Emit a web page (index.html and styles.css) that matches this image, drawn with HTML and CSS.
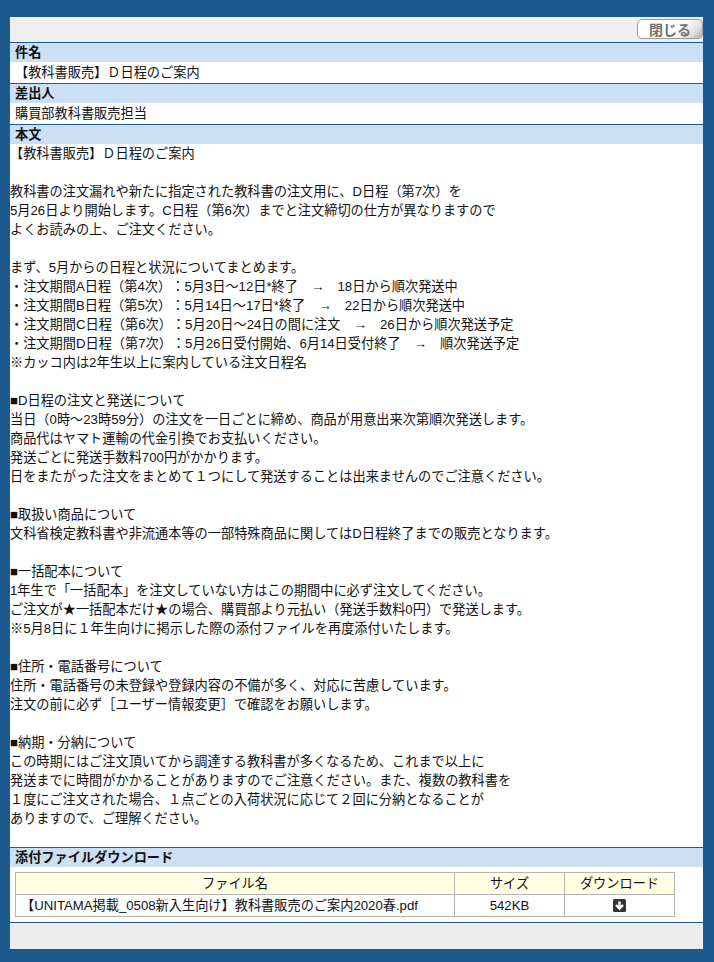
FILE: index.html
```html
<!DOCTYPE html>
<html lang="ja">
<head>
<meta charset="utf-8">
<title>本文</title>
<link rel="stylesheet" href="styles.css">
</head>
<body>
<main class="panel">
  <div class="toolbar">
    <button class="close" type="button">閉じる</button>
  </div>
  <section class="block">
    <h2 class="head">件名</h2>
    <div class="value subject">【教科書販売】Ｄ日程のご案内</div>
  </section>
  <section class="block">
    <h2 class="head">差出人</h2>
    <div class="value">購買部教科書販売担当</div>
  </section>
  <section class="block">
    <h2 class="head">本文</h2>
    <div class="message">【教科書販売】Ｄ日程のご案内

教科書の注文漏れや新たに指定された教科書の注文用に、D日程（第7次）を
5月26日より開始します。C日程（第6次）までと注文締切の仕方が異なりますので
よくお読みの上、ご注文ください。

まず、5月からの日程と状況についてまとめます。
・注文期間A日程（第4次）：5月3日～12日*終了　→　18日から順次発送中
・注文期間B日程（第5次）：5月14日～17日*終了　→　22日から順次発送中
・注文期間C日程（第6次）：5月20日～24日の間に注文　→　26日から順次発送予定
・注文期間D日程（第7次）：5月26日受付開始、6月14日受付終了　→　順次発送予定
※カッコ内は2年生以上に案内している注文日程名

■D日程の注文と発送について
当日（0時～23時59分）の注文を一日ごとに締め、商品が用意出来次第順次発送します。
商品代はヤマト運輸の代金引換でお支払いください。
発送ごとに発送手数料700円がかかります。
日をまたがった注文をまとめて１つにして発送することは出来ませんのでご注意ください。

■取扱い商品について
文科省検定教科書や非流通本等の一部特殊商品に関してはD日程終了までの販売となります。

■一括配本について
1年生で「一括配本」を注文していない方はこの期間中に必ず注文してください。
ご注文が★一括配本だけ★の場合、購買部より元払い（発送手数料0円）で発送します。
※5月8日に１年生向けに掲示した際の添付ファイルを再度添付いたします。

■住所・電話番号について
住所・電話番号の未登録や登録内容の不備が多く、対応に苦慮しています。
注文の前に必ず［ユーザー情報変更］で確認をお願いします。

■納期・分納について
この時期にはご注文頂いてから調達する教科書が多くなるため、これまで以上に
発送までに時間がかかることがありますのでご注意ください。また、複数の教科書を
１度にご注文された場合、１点ごとの入荷状況に応じて２回に分納となることが
ありますので、ご理解ください。</div>
  </section>
  <section class="block attach">
    <h2 class="head">添付ファイルダウンロード</h2>
    <div class="table-wrap">
      <table class="files">
        <thead>
          <tr><th class="c-name">ファイル名</th><th class="c-size">サイズ</th><th class="c-dl">ダウンロード</th></tr>
        </thead>
        <tbody>
          <tr>
            <td class="c-name file">【UNITAMA掲載_0508新入生向け】教科書販売のご案内2020春.pdf</td>
            <td class="c-size">542KB</td>
            <td class="c-dl">
              <svg class="dl-icon" viewBox="0 0 13 13" width="13" height="13" aria-label="ダウンロード">
                <rect width="13" height="13" rx="1.5" fill="#333"/>
                <path d="M6.5 2.5v7M3 6l3.5 3.6L10 6" fill="none" stroke="#fff" stroke-width="2.4"/>
              </svg>
            </td>
          </tr>
        </tbody>
      </table>
    </div>
  </section>
  <div class="footer"></div>
</main>
</body>
</html>
```
FILE: styles.css
```css
html, body { margin: 0; padding: 0; }
body {
  background: #1c5a90;
  padding: 17px 11px 13px 10px;
  font-family: "Liberation Sans", "Noto Sans CJK JP", sans-serif;
  font-size: 13.2px;
  color: #111;
  text-spacing-trim: space-all;
}
.panel { background: #fff; display: flex; flex-direction: column; height: 932px; }
.toolbar {
  height: 25px;
  background: #efefef;
  display: flex;
  justify-content: flex-end;
  align-items: flex-start;
  padding-top: 2px;
  box-sizing: border-box;
}
.close {
  width: 66px;
  height: 20px;
  padding: 0;
  margin-right: 0;
  border: 1px solid #999;
  border-radius: 5px;
  background: linear-gradient(135deg, #fff 0%, #fff 60%, #ddd 85%, #a8a8a8 100%);
  color: #707070;
  font: bold 14px "Noto Sans CJK JP", sans-serif;
  line-height: 18px;
}
.block { border-top: 1px solid #1c5a90; }
.head {
  margin: 0;
  height: 19px;
  line-height: 19px;
  padding-left: 5px;
  background: #cbe0f5;
  font-size: 13.2px;
  font-weight: bold;
}
.value { height: 21px; line-height: 21px; padding-left: 5px; }
.message {
  height: 703px;
  line-height: 19px;
  white-space: pre-wrap;
  box-sizing: border-box;
}
.table-wrap { padding: 5px 28px 5px 5px; height: 55px; box-sizing: border-box; }
.files { border-collapse: collapse; width: 660px; table-layout: fixed; }
.files th, .files td {
  border: 1px solid #b4b4b4;
  height: 21px;
  padding: 0;
  font-weight: normal;
  text-align: center;
  line-height: 20px;
}
.files th { background: #ffffe3; }
.files td.file { text-align: left; padding-left: 5px; }
.c-name { width: 438px; }
.c-size { width: 109px; }
.dl-icon { display: block; margin: 0 auto; }
.footer { flex: 1; background: #ececec; border-top: 1px solid #1c5a90; }
```
